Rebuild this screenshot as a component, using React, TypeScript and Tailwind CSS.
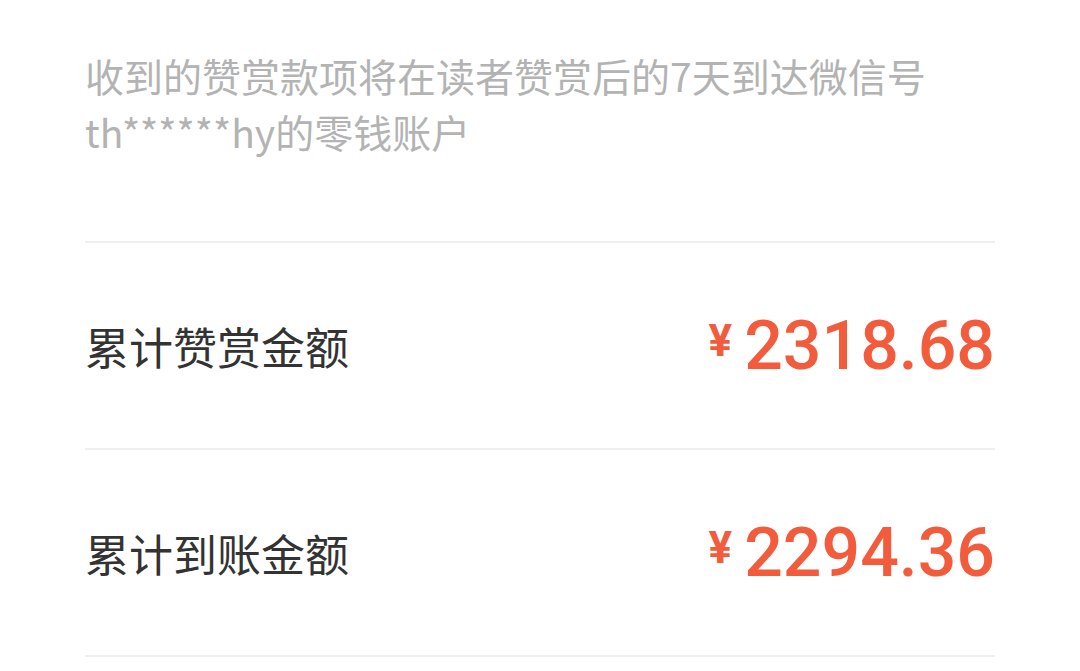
import React from 'react';

const cjk = "font-['Noto_Sans_CJK_SC','Noto_Sans',sans-serif]";

function AmountRow({ label, amount }: { label: string; amount: string }) {
  return (
    <div className="flex h-[207px] items-center justify-between border-b-2 border-[#efefef]">
      <span className={`${cjk} text-[44px] text-[#333333]`}>{label}</span>
      <div className="flex items-start text-[#f25c3c]">
        <span className="mr-[12px] mt-[7px] font-['Roboto',sans-serif] text-[44px] font-bold leading-none">¥</span>
        <span className="font-['Roboto',sans-serif] text-[68px] font-medium leading-none">{amount}</span>
      </div>
    </div>
  );
}

export default function App() {
  return (
    <div className="min-h-screen w-full bg-white px-[85px] pt-[47px]">
      <p className={`${cjk} text-[39px] leading-[56px] text-[#b3b3b3]`}>
        收到的赞赏款项将在读者赞赏后的7天到达微信号
        <br />
        th******hy的零钱账户
      </p>
      <div className="mt-[82px] border-t-2 border-[#efefef]">
        <AmountRow label="累计赞赏金额" amount="2318.68" />
        <AmountRow label="累计到账金额" amount="2294.36" />
      </div>
    </div>
  );
}
